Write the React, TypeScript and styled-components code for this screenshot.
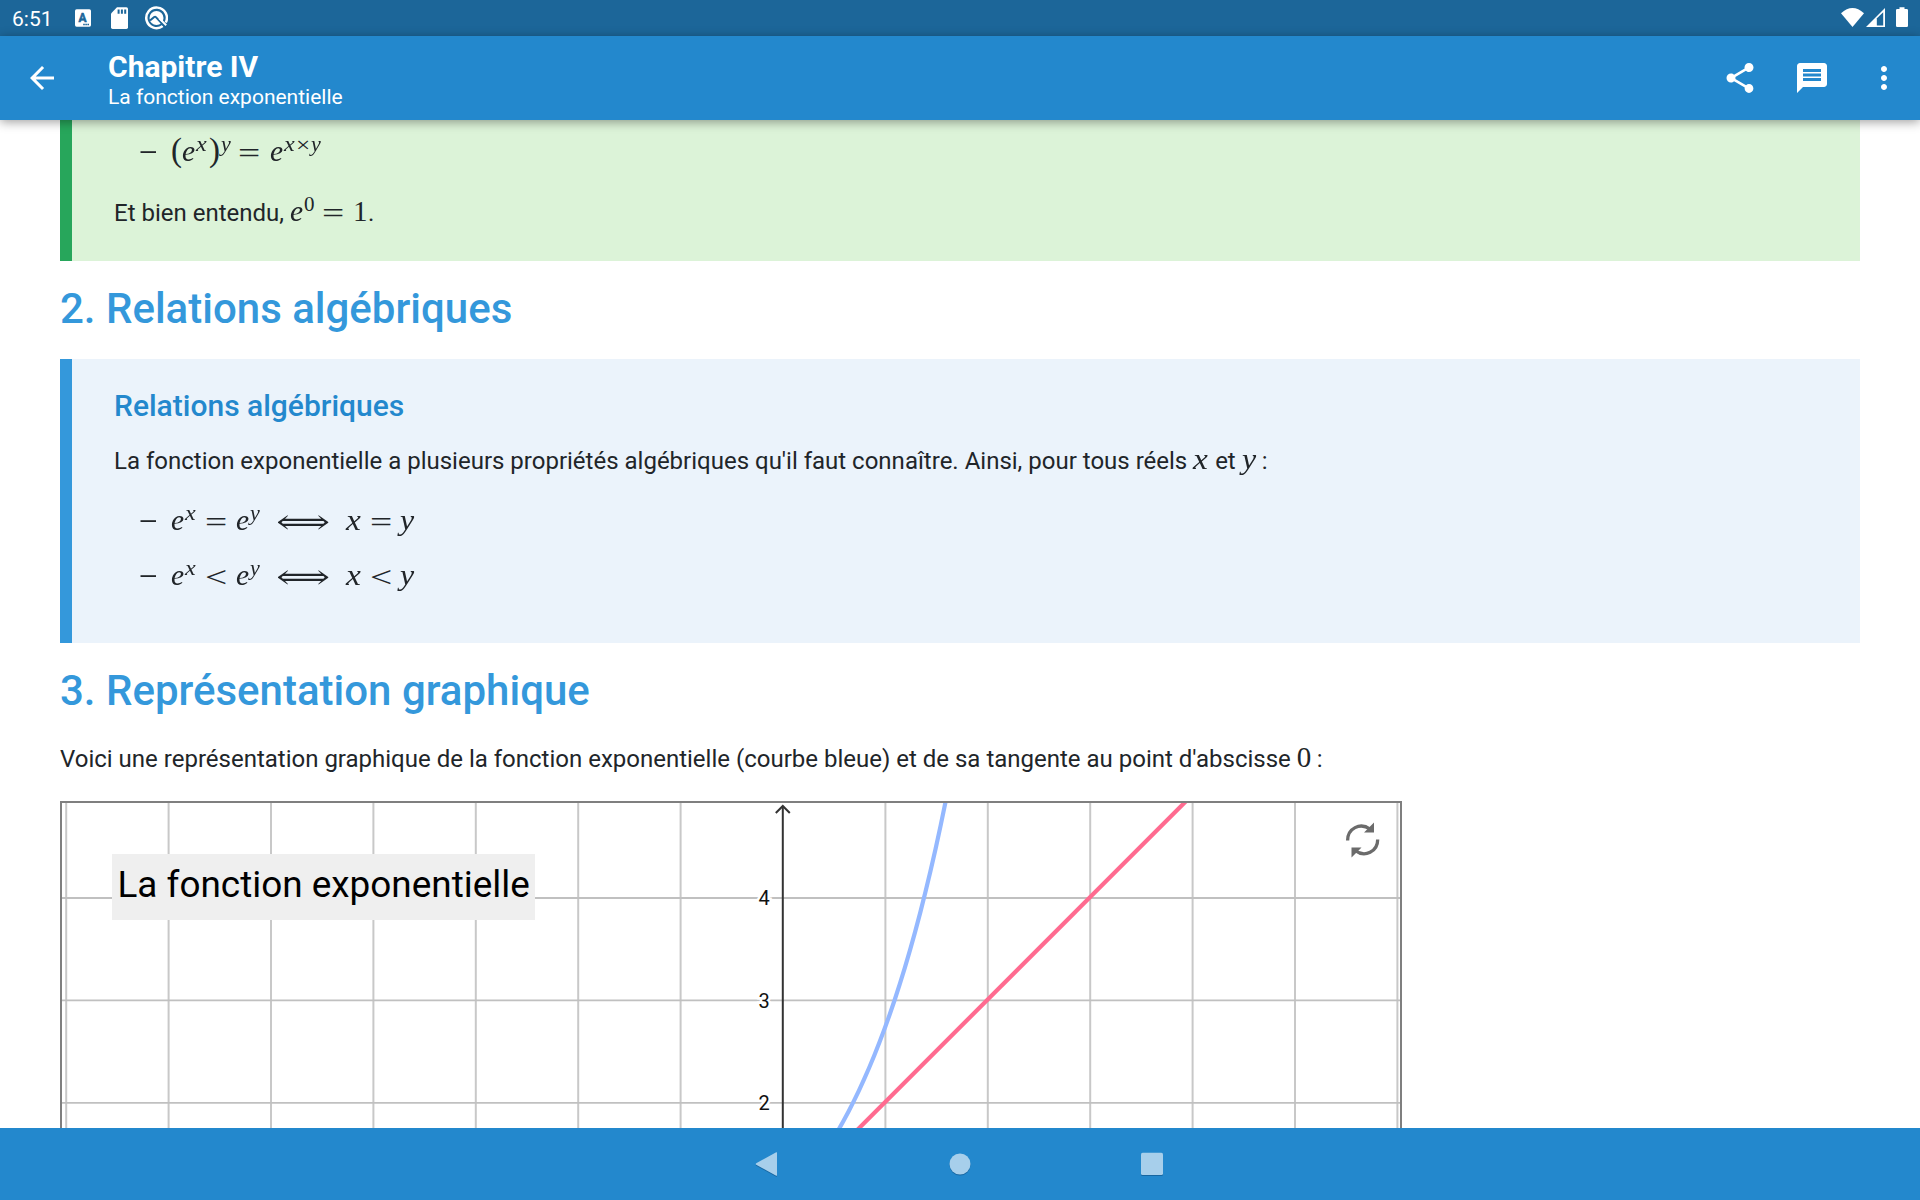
import React from "react";
import styled, { createGlobalStyle } from "styled-components";

const GlobalStyle = createGlobalStyle`
  * { box-sizing: border-box; }
  body { margin: 0; background: #fff; font-family: Roboto, sans-serif; }
`;

const Screen = styled.div`
  display: flex;
  flex-direction: column;
  width: 1920px;
  height: 1200px;
  overflow: hidden;
`;

const StatusBar = styled.div`
  display: flex;
  align-items: center;
  height: 36px;
  flex: none;
  padding: 0 12px;
  background: #1c6699;
  color: #fff;
`;

const Clock = styled.span`
  width: 60px;
  font-size: 21px;
  line-height: 36px;
  padding-top: 2px;
`;

const StatusIcons = styled.div<{ $end?: boolean }>`
  display: flex;
  align-items: center;
  margin-left: ${(p) => (p.$end ? "auto" : "0")};
  svg { display: block; }
`;

const AppBar = styled.header`
  display: flex;
  align-items: center;
  height: 84px;
  flex: none;
  padding: 0 18px 0 24px;
  background: #2388cd;
  color: #fff;
  z-index: 1;
  box-shadow: 0 2px 10px rgba(0, 0, 0, 0.38);
`;

const Titles = styled.div`
  display: flex;
  flex-direction: column;
  margin-left: 48px;
  padding-top: 2px;
  flex: 1;
`;

const Title = styled.h1`
  margin: 0;
  font-size: 30px;
  line-height: 36px;
  font-weight: 700;
`;

const Subtitle = styled.span`
  font-size: 21px;
  line-height: 24px;
`;

const Actions = styled.div`
  display: flex;
  gap: 36px;
`;

const Content = styled.main`
  flex: 1;
  min-height: 0;
  overflow: hidden;
  padding: 0 60px;
  color: #212529;
`;

const Callout = styled.section<{ $accent: string; $fill: string; $height: number; $top: number }>`
  height: ${(p) => p.$height}px;
  padding: ${(p) => p.$top}px 42px 0;
  border-left: 12px solid ${(p) => p.$accent};
  background: ${(p) => p.$fill};
`;

const SectionTitle = styled.h2`
  margin: 0;
  padding: 23px 0 26px;
  font-size: 42px;
  line-height: 49px;
  font-weight: 500;
  color: #3498db;
`;

const CalloutTitle = styled.h3`
  margin: 0 0 19px;
  font-size: 30px;
  line-height: 36px;
  font-weight: 500;
  color: #2388cd;
`;

const Text = styled.p<{ $after?: number }>`
  margin: 0 0 ${(p) => p.$after ?? 0}px;
  font-size: 24px;
  line-height: 36px;
  white-space: nowrap;
`;

const List = styled.ul`
  margin: 0;
  padding: 0 0 0 24px;
  list-style: none;
`;

const Item = styled.li<{ $after: number }>`
  display: flex;
  height: 36px;
  margin-bottom: ${(p) => p.$after}px;
  font-size: 24px;
  line-height: 36px;
`;

const Dash = styled.span`
  width: 33px;
  transform: scaleX(1.32);
  transform-origin: 0 50%;
`;

const Formula = styled.span`
  font-family: "Liberation Serif", serif;
  white-space: nowrap;
`;

const Sym = styled.span<{ $w: number; $sup?: boolean; $it?: boolean; $sx?: number; $size?: number; $dy?: number }>`
  display: inline-block;
  width: ${(p) => p.$w}px;
  font-size: ${(p) => p.$size ?? (p.$sup ? 21 : 29)}px;
  line-height: 0;
  font-style: ${(p) => (p.$it ? "italic" : "normal")};
  vertical-align: ${(p) => (p.$sup ? 10 : 0)}px;
  transform: translateY(${(p) => p.$dy ?? 0}px) scaleX(${(p) => p.$sx ?? 1});
  transform-origin: 0 50%;
`;

const Arrow = styled(Sym)`
  font-family: "DejaVu Math TeX Gyre", "DejaVu Sans", sans-serif;
`;

const Graph = styled.div`
  position: relative;
  width: 1342px;
  height: 600px;
  border: 2px solid #7f7f7f;
`;

const GraphTitle = styled.div`
  position: absolute;
  left: 50px;
  top: 51px;
  width: 423px;
  height: 66px;
  padding: 8px 0 0 5.500px;
  background: #efefef;
  color: #000;
  font-size: 36.900px;
  line-height: 45px;
  white-space: nowrap;
`;

const Reset = styled.div`
  position: absolute;
  left: 1281px;
  top: 17px;
`;

const TickLabel = styled.text`
  font: 20px Roboto, sans-serif;
  fill: #111;
  stroke: #fff;
  stroke-width: 5px;
  paint-order: stroke;
`;

const BadgeLetter = styled.text`
  font: 700 12px Roboto, sans-serif;
  fill: #1c6699;
  stroke: #1c6699;
  stroke-width: 0.5px;
`;

const NavBar = styled.nav`
  display: flex;
  align-items: center;
  justify-content: center;
  gap: 156px;
  height: 72px;
  flex: none;
  z-index: 1;
  background: #2388cd;
  svg { display: block; filter: drop-shadow(0 1px 0.6px rgba(0, 40, 80, 0.35)); }
`;

const Icon = ({ d }: { d: string }) => (
  <svg width="36" height="36" viewBox="0 0 24 24" fill="#fff">
    <path d={d} />
  </svg>
);

const BACK = "M20 11H7.83l5.59-5.59L12 4l-8 8 8 8 1.41-1.41L7.83 13H20v-2z";
const SHARE =
  "M18 16.08c-.76 0-1.44.3-1.96.77L8.91 12.7c.05-.23.09-.46.09-.7s-.04-.47-.09-.7l7.05-4.11c.54.5 1.25.81 2.04.81 1.66 0 3-1.34 3-3s-1.34-3-3-3-3 1.34-3 3c0 .24.04.47.09.7L8.04 9.81C7.5 9.31 6.79 9 6 9c-1.66 0-3 1.34-3 3s1.34 3 3 3c.79 0 1.5-.31 2.04-.81l7.12 4.16c-.05.21-.08.43-.08.65 0 1.61 1.31 2.92 2.92 2.92 1.61 0 2.92-1.31 2.92-2.92s-1.31-2.92-2.92-2.92z";
const MESSAGE =
  "M20 2H4c-1.1 0-1.99.9-1.99 2L2 22l4-4h14c1.1 0 2-.9 2-2V4c0-1.1-.9-2-2-2zm-2 12H6v-2h12v2zm0-3H6V9h12v2zm0-3H6V6h12v2z";
const MORE =
  "M12 8c1.1 0 2-.9 2-2s-.9-2-2-2-2 .9-2 2 .9 2 2 2zm0 2c-1.1 0-2 .9-2 2s.9 2 2 2 2-.9 2-2-.9-2-2-2zm0 6c-1.1 0-2 .9-2 2s.9 2 2 2 2-.9 2-2-.9-2-2-2z";

const UNIT = 102.4;
const ORIGIN_X = 721;
const ORIGIN_Y = 504.6;
const px = (x: number) => ORIGIN_X + UNIT * x;
const py = (y: number) => ORIGIN_Y - UNIT * y;

const curve = Array.from({ length: 60 }, (_, i) => {
  const x = -1 + i * 0.05;
  return `${(px(x) - 1).toFixed(2)},${py(Math.exp(x)).toFixed(2)}`;
}).join(" ");

const Plot = () => (
  <svg width="1338" height="596" style={{ display: "block" }}>
    {[-7, -6, -5, -4, -3, -2, -1, 1, 2, 3, 4, 5, 6].map((x) => (
      <line key={x} x1={px(x)} x2={px(x)} y1="0" y2="596" stroke="#c8c8c8" strokeWidth="2" />
    ))}
    {[1, 2, 3, 4].map((y) => (
      <line key={y} x1="0" x2="1338" y1={py(y)} y2={py(y)} stroke="#c0c0c0" strokeWidth="1.8" />
    ))}
    <g stroke="#333" strokeWidth="2" fill="none">
      <line x1="720.800" x2="720.800" y1="3" y2="596" />
      <path d="M713.800 10L720.800 3L727.800 10" />
    </g>
    {[2, 3, 4].map((y) => (
      <TickLabel key={y} x="696.500" y={py(y) + 7.2}>
        {y}
      </TickLabel>
    ))}
    <polyline points={curve} fill="none" stroke="#94b8ff" strokeWidth="4.2" />
    <line x1={px(-1) - 1} y1={py(0)} x2={px(5) - 1} y2={py(6)} stroke="#ff6b90" strokeWidth="4.2" />
  </svg>
);

const Equivalence = ({ op }: { op: string }) => (
  <Formula>
    <Sym $it $w={14} $sx={1.02}>e</Sym>
    <Sym $it $sup $w={20} $sx={1.15}>x</Sym>
    <Sym $w={31} $sx={1.36} $dy={1.5}>{op}</Sym>
    <Sym $it $w={14} $sx={1.02}>e</Sym>
    <Sym $it $sup $w={25} $sx={1.05}>y</Sym>
    <Arrow $w={71} $sx={1.43} $size={28}>⟺</Arrow>
    <Sym $it $w={24} $sx={1.15}>x</Sym>
    <Sym $w={30} $sx={1.36} $dy={1.5}>{op}</Sym>
    <Sym $it $w={15} $sx={1.1}>y</Sym>
  </Formula>
);

export default function App() {
  return (
    <Screen>
      <GlobalStyle />
      <StatusBar>
        <Clock>6:51</Clock>
        <StatusIcons>
          <svg width="96" height="36" viewBox="72 0 96 36">
            <rect x="75" y="9.3" width="16" height="17.4" rx="1.6" fill="#fff" />
            <BadgeLetter x="78.500" y="22">A</BadgeLetter>
            <path d="M83.2 24.5h6" stroke="#1c6699" strokeWidth="1.3" strokeDasharray="1.6 .5" />
            <path d="M117 7.3h9.4q1.600 0 1.600 1.600v18.400q0 1.600-1.600 1.600h-13.800q-1.600 0-1.600-1.600V13.400z" fill="#fff" />
            <path d="M118.600 9.600v4.200M121.900 9.600v4.200M125.200 9.600v4.200" stroke="#1c6699" strokeWidth="2" />
            <path d="M162.800 26.100A10.300 10.300 0 1 1 165.800 22.500" fill="none" stroke="#fff" strokeWidth="2.500" />
            <circle cx="156.500" cy="18" r="7" fill="#fff" />
            <path d="M150 20.600l4.200-3.600q.9-.7 1.700.1l9.600 10.100" fill="none" stroke="#1c6699" strokeWidth="2" />
            <path d="M159.200 18.200l7 7" stroke="#fff" strokeWidth="2" />
          </svg>
        </StatusIcons>
        <StatusIcons $end>
          <svg width="72" height="36" viewBox="1836 0 72 36">
            <path d="M1841 13.2Q1852.500 2.600 1864 13.200L1852.500 27z" fill="#fff" />
            <path d="M1866 27L1885 8v19z" fill="#fff" />
            <path d="M1876.400 18.800L1883.200 12.200V25.400h-6.800z" fill="#1c6699" />
            <path d="M1876.400 27V18.500" stroke="#fff" strokeWidth="0.800" />
            <path d="M1899.500 9V7.200h5V9h2.200q1.300 0 1.300 1.300v15.400q0 1.300-1.300 1.300h-9.400q-1.300 0-1.300-1.300V10.300q0-1.300 1.300-1.300z" fill="#fff" />
          </svg>
        </StatusIcons>
      </StatusBar>
      <AppBar>
        <Icon d={BACK} />
        <Titles>
          <Title>Chapitre IV</Title>
          <Subtitle>La fonction exponentielle</Subtitle>
        </Titles>
        <Actions>
          <Icon d={SHARE} />
          <Icon d={MESSAGE} />
          <Icon d={MORE} />
        </Actions>
      </AppBar>
      <Content>
        <Callout $accent="#27a65b" $fill="#dcf3d8" $height={141} $top={15}>
          <List>
            <Item $after={24}>
              <Dash>–</Dash>
              <Formula>
                <Sym $w={11} $size={33}>(</Sym>
                <Sym $it $w={14} $sx={1.02}>e</Sym>
                <Sym $it $sup $w={13} $sx={1.15}>x</Sym>
                <Sym $w={12} $size={33}>)</Sym>
                <Sym $it $sup $w={17} $sx={1.05}>y</Sym>
                <Sym $w={32} $sx={1.36} $dy={1.5}>=</Sym>
                <Sym $it $w={14} $sx={1.02}>e</Sym>
                <Sym $it $sup $w={12} $sx={1.15}>x</Sym>
                <Sym $sup $w={15} $sx={1.2} $dy={1}>×</Sym>
                <Sym $it $sup $w={12} $sx={1.05}>y</Sym>
              </Formula>
            </Item>
          </List>
          <Text>
            Et bien entendu,{" "}
            <Formula>
              <Sym $it $w={14} $sx={1.02}>e</Sym>
              <Sym $sup $w={18}>0</Sym>
              <Sym $w={31} $sx={1.36} $dy={1.5}>=</Sym>
              <Sym $w={15}>1</Sym>
            </Formula>
            .
          </Text>
        </Callout>
        <SectionTitle>2. Relations algébriques</SectionTitle>
        <Callout $accent="#3498db" $fill="#ebf3fb" $height={284} $top={29}>
          <CalloutTitle>Relations algébriques</CalloutTitle>
          <Text $after={25}>
            La fonction exponentielle a plusieurs propriétés algébriques qu'il faut connaître. Ainsi, pour tous réels{" "}
            <Formula><Sym $it $w={16} $sx={1.15}>x</Sym></Formula> et{" "}
            <Formula><Sym $it $w={14} $sx={1.1}>y</Sym></Formula> :
          </Text>
          <List>
            <Item $after={19}>
              <Dash>–</Dash>
              <Equivalence op="=" />
            </Item>
            <Item $after={0}>
              <Dash>–</Dash>
              <Equivalence op="<" />
            </Item>
          </List>
        </Callout>
        <SectionTitle>3. Représentation graphique</SectionTitle>
        <Text $after={24}>
          Voici une représentation graphique de la fonction exponentielle (courbe bleue) et de sa tangente au point
          d'abscisse <Formula><Sym $w={14}>0</Sym></Formula> :
        </Text>
        <Graph>
          <Plot />
          <GraphTitle>La fonction exponentielle</GraphTitle>
          <Reset>
            <svg width="40" height="40" viewBox="0 0 40 40" fill="none" stroke="#6b6b6b" strokeWidth="3.300">
              <path d="M4.600 20.500C4.600 8.500 17 2 27 9" />
              <path d="M34.700 19.500C34.700 31.500 22 38 12 30.500" />
              <path d="M31 2.500v10h-10zM8.500 37.500v-10h10z" fill="#6b6b6b" stroke="none" />
            </svg>
          </Reset>
        </Graph>
      </Content>
      <NavBar>
        <svg width="36" height="36" viewBox="0 0 36 36" fill="#a7cfeb">
          <path d="M6.200 17.200L26.200 6.300q.8-.4.800.5v22.400q0 .9-.8.500L6.200 18.800q-1-.8 0-1.600z" />
        </svg>
        <svg width="36" height="36" viewBox="0 0 36 36" fill="#a7cfeb">
          <circle cx="18" cy="18" r="10.500" />
        </svg>
        <svg width="36" height="36" viewBox="0 0 36 36" fill="#a7cfeb">
          <rect x="7" y="6.700" width="22" height="22.400" rx="1.600" />
        </svg>
      </NavBar>
    </Screen>
  );
}
